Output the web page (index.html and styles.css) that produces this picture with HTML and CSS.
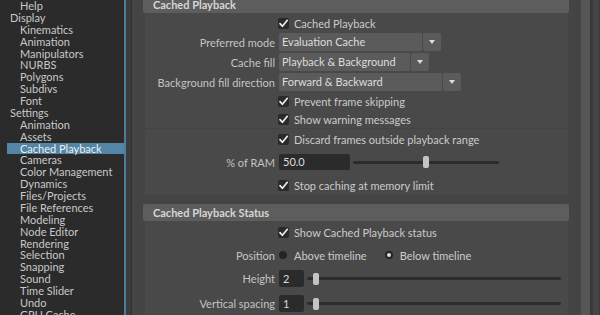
FILE: index.html
```html
<!DOCTYPE html>
<html>
<head>
<meta charset="utf-8">
<link rel="stylesheet" href="styles.css">
</head>
<body>
<div class="app">
  <aside class="sidebar">
    <ul class="tree">
      <li class="item child">Help</li>
      <li class="item top">Display</li>
      <li class="item child">Kinematics</li>
      <li class="item child">Animation</li>
      <li class="item child">Manipulators</li>
      <li class="item child">NURBS</li>
      <li class="item child">Polygons</li>
      <li class="item child">Subdivs</li>
      <li class="item child">Font</li>
      <li class="item top">Settings</li>
      <li class="item child">Animation</li>
      <li class="item child">Assets</li>
      <li class="item child selected">Cached Playback</li>
      <li class="item child">Cameras</li>
      <li class="item child">Color Management</li>
      <li class="item child">Dynamics</li>
      <li class="item child">Files/Projects</li>
      <li class="item child">File References</li>
      <li class="item child">Modeling</li>
      <li class="item child">Node Editor</li>
      <li class="item child">Rendering</li>
      <li class="item child">Selection</li>
      <li class="item child">Snapping</li>
      <li class="item child">Sound</li>
      <li class="item child">Time Slider</li>
      <li class="item child">Undo</li>
      <li class="item child">GPU Cache</li>
      <li class="item child">XGen</li>
    </ul>
  </aside>
  <div class="splitter"></div>
  <main class="main">
    <div class="content">
      <section class="group first">
        <div class="group-head">Cached Playback</div>
        <div class="group-body">
          <div class="row h20">
            <span class="label"></span>
            <label class="check"><span class="box"><svg width="11" height="11" viewBox="0 0 11 11"><path d="M2 5.6 L4.4 8.3 L9.3 2.3" fill="none" stroke="#ececec" stroke-width="1.7" stroke-linecap="round" stroke-linejoin="round"/></svg></span><span class="check-text">Cached Playback</span></label>
          </div>
          <div class="row h18 gap2">
            <span class="label">Preferred mode</span>
            <div class="combo"><span class="combo-field w143">Evaluation Cache</span><span class="combo-btn"><span class="tri"></span></span></div>
          </div>
          <div class="row h18 gap2">
            <span class="label">Cache fill</span>
            <div class="combo"><span class="combo-field w131">Playback &amp; Background</span><span class="combo-btn"><span class="tri"></span></span></div>
          </div>
          <div class="row h18">
            <span class="label">Background fill direction</span>
            <div class="combo"><span class="combo-field w163">Forward &amp; Backward</span><span class="combo-btn"><span class="tri"></span></span></div>
          </div>
          <div class="row h20">
            <span class="label"></span>
            <label class="check"><span class="box"><svg width="11" height="11" viewBox="0 0 11 11"><path d="M2 5.6 L4.4 8.3 L9.3 2.3" fill="none" stroke="#ececec" stroke-width="1.7" stroke-linecap="round" stroke-linejoin="round"/></svg></span><span class="check-text">Prevent frame skipping</span></label>
          </div>
          <div class="row h17">
            <span class="label"></span>
            <label class="check"><span class="box"><svg width="11" height="11" viewBox="0 0 11 11"><path d="M2 5.6 L4.4 8.3 L9.3 2.3" fill="none" stroke="#ececec" stroke-width="1.7" stroke-linecap="round" stroke-linejoin="round"/></svg></span><span class="check-text">Show warning messages</span></label>
          </div>
          <div class="sep"></div>
          <div class="row h20">
            <span class="label"></span>
            <label class="check"><span class="box"><svg width="11" height="11" viewBox="0 0 11 11"><path d="M2 5.6 L4.4 8.3 L9.3 2.3" fill="none" stroke="#ececec" stroke-width="1.7" stroke-linecap="round" stroke-linejoin="round"/></svg></span><span class="check-text">Discard frames outside playback range</span></label>
          </div>
          <div class="row h26">
            <span class="label">% of RAM</span>
            <div class="field-slider">
              <span class="field w71">50.0</span>
              <div class="track w146"><span class="handle" style="margin-left: 70px"></span></div>
            </div>
          </div>
          <div class="row h20">
            <span class="label"></span>
            <label class="check"><span class="box"><svg width="11" height="11" viewBox="0 0 11 11"><path d="M2 5.6 L4.4 8.3 L9.3 2.3" fill="none" stroke="#ececec" stroke-width="1.7" stroke-linecap="round" stroke-linejoin="round"/></svg></span><span class="check-text">Stop caching at memory limit</span></label>
          </div>
        </div>
      </section>
      <section class="group">
        <div class="group-head">Cached Playback Status</div>
        <div class="group-body">
          <div class="row h23">
            <span class="label"></span>
            <label class="check"><span class="box"><svg width="11" height="11" viewBox="0 0 11 11"><path d="M2 5.6 L4.4 8.3 L9.3 2.3" fill="none" stroke="#ececec" stroke-width="1.7" stroke-linecap="round" stroke-linejoin="round"/></svg></span><span class="check-text">Show Cached Playback status</span></label>
          </div>
          <div class="row h22">
            <span class="label">Position</span>
            <div class="radios">
              <label class="radio"><span class="dot"></span><span class="radio-text">Above timeline</span></label>
              <label class="radio"><span class="dot on"></span><span class="radio-text">Below timeline</span></label>
            </div>
          </div>
          <div class="row h25">
            <span class="label">Height</span>
            <div class="field-slider">
              <span class="field w25">2</span>
              <div class="track w254"><span class="handle" style="margin-left: 6px"></span></div>
            </div>
          </div>
          <div class="row h25">
            <span class="label">Vertical spacing</span>
            <div class="field-slider">
              <span class="field w25">1</span>
              <div class="track w254"><span class="handle" style="margin-left: 6px"></span></div>
            </div>
          </div>
        </div>
      </section>
    </div>
  </main>
  <div class="vscroll"></div>
  <div class="edge"></div>
</div>
</body>
</html>
```

FILE: styles.css
```css
html, body {
  margin: 0;
  padding: 0;
}
body {
  width: 600px;
  height: 315px;
  overflow: hidden;
  background: #444444;
  font-family: Lato, "Liberation Sans", sans-serif;
  font-size: 11px;
  color: #c8c8c8;
}
.app {
  display: flex;
  height: 315px;
}

/* sidebar */
.sidebar {
  width: 124px;
  flex: none;
  background: #2b2b2b;
  border-right: 2px solid #4e7c9c;
  overflow: hidden;
}
.tree {
  list-style: none;
  margin: 0;
  padding: 0 0 0 7px;
}
.item {
  height: 11.88px;
  line-height: 11.88px;
  white-space: nowrap;
  color: #c8c8c8;
}
.item.top { padding-left: 3px; }
.item.child { padding-left: 13px; }
.item.selected {
  background: #5285a6;
  color: #eeeeee;
}
.splitter {
  width: 5px;
  flex: none;
  background: #3c3c3c;
  border-right: 1px solid #333333;
}

/* main */
.main {
  flex: 1;
  overflow: hidden;
  background: #444444;
}
.content {
  margin-top: -4px;
}
.group {
  margin: 0 12px 9px 11px;
}
.group-head {
  height: 17px;
  line-height: 17px;
  padding-left: 10px;
  background: #5d5d5d;
  border-radius: 2px;
  font-weight: bold;
  color: #d6d6d6;
}
.group-body {
  margin: 0 1px 0 2px;
  background: #494949;
}
.row {
  display: grid;
  grid-template-columns: 130px 1fr;
  column-gap: 4px;
  align-items: center;
}
.h17 { height: 17px; }
.h18 { height: 18px; }
.h20 { height: 20px; }
.h22 { height: 22px; }
.h23 { height: 23px; }
.h25 { height: 25px; }
.h26 { height: 26px; }
.gap2 { margin-bottom: 2px; }
.sep {
  height: 1px;
  background: #444444;
}
.label {
  text-align: right;
  white-space: nowrap;
  color: #c4c4c4;
}

/* checkbox */
.check {
  display: flex;
  align-items: center;
  margin-left: -1px;
}
.box {
  width: 11px;
  height: 11px;
  background: #2a2a2a;
  border-radius: 2px;
  display: flex;
}
.check-text {
  margin-left: 5px;
  white-space: nowrap;
  color: #cbcbcb;
}

/* combo */
.combo {
  display: flex;
  gap: 1px;
  height: 18px;
}
.combo-field {
  background: #5b5b5b;
  border-radius: 2px;
  line-height: 18px;
  padding-left: 3px;
  box-sizing: border-box;
  color: #dddddd;
  white-space: nowrap;
}
.w131 { width: 131px; }
.w143 { width: 143px; }
.w163 { width: 163px; }
.combo-btn {
  width: 18px;
  background: #5b5b5b;
  border-radius: 2px;
  display: flex;
  align-items: center;
  justify-content: center;
}
.tri {
  width: 0;
  height: 0;
  border-left: 3.5px solid transparent;
  border-right: 3.5px solid transparent;
  border-top: 4px solid #dcdcdc;
}

/* fields and sliders */
.field-slider {
  display: flex;
  align-items: center;
  gap: 3px;
}
.field {
  height: 16px;
  line-height: 16px;
  background: #2b2b2b;
  border-radius: 2px;
  padding-left: 4px;
  box-sizing: border-box;
  color: #dddddd;
}
.w25 { width: 25px; height: 17px; line-height: 17px; }
.w71 { width: 71px; }
.track {
  height: 3px;
  background: #2c2c2c;
  border-radius: 2px;
  display: flex;
  align-items: center;
}
.w146 { width: 146px; }
.w254 { width: 254px; }
.handle {
  flex: none;
  width: 6px;
  height: 12px;
  background: #c4c4c4;
  border-radius: 2px;
}

/* radios */
.radios {
  display: flex;
  align-items: center;
  gap: 18px;
}
.radio {
  display: flex;
  align-items: center;
}
.dot {
  width: 8px;
  height: 8px;
  border-radius: 50%;
  background: #242424;
  display: flex;
  align-items: center;
  justify-content: center;
}
.dot.on::after {
  content: "";
  width: 4px;
  height: 4px;
  border-radius: 50%;
  background: #dedede;
}
.radio-text {
  margin-left: 7px;
  white-space: nowrap;
  color: #cbcbcb;
}

/* right scroll area */
.vscroll {
  width: 9px;
  flex: none;
  background: #565656;
  border-right: 3px solid #393939;
}
.edge {
  width: 7px;
  flex: none;
  background: #454545;
  border-right: 1px solid #3a3a3a;
  box-sizing: border-box;
}
```
